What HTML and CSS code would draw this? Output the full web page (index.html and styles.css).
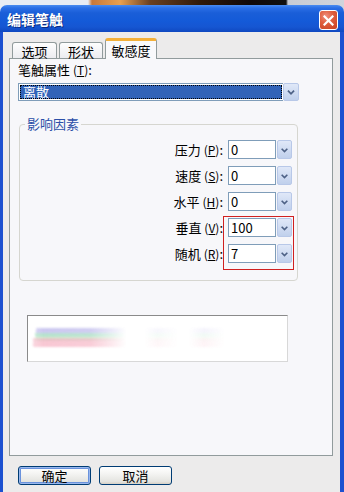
FILE: index.html
```html
<!DOCTYPE html>
<html lang="zh">
<head>
<meta charset="utf-8">
<title>编辑笔触</title>
<link rel="stylesheet" href="styles.css">
</head>
<body>
<div class="window">
  <div class="titlebar">
    <span class="title">编辑笔触</span>
    <span class="close"><svg width="11" height="11" viewBox="0 0 11 11"><path d="M1.5 1.5 L9.5 9.5 M9.5 1.5 L1.5 9.5" stroke="#fff" stroke-width="2.2" stroke-linecap="square"/></svg></span>
  </div>
  <div class="frame">
    <div class="tabs">
      <div class="tab t1">选项</div>
      <div class="tab t2">形状</div>
      <div class="tab active">敏感度</div>
    </div>
    <div class="panel">
      <div class="label">笔触属性 <span class="acc">(<u>T</u>)</span>:</div>
      <div class="combo">
        <div class="combo-val"><span>离散</span></div>
        <div class="drop"><svg width="16" height="16" viewBox="0 0 16 16"><path d="M4.5 6.5 L8 10 L11.5 6.5" fill="none" stroke="#4d6185" stroke-width="2"/></svg></div>
      </div>
      <fieldset class="group">
        <legend>影响因素</legend>
        <div class="row"><span class="rl">压力 <span class="acc">(<u>P</u>)</span>:</span><div class="spin"><div class="inp">0</div><div class="drop"><svg width="16" height="16" viewBox="0 0 16 16"><path d="M4.5 6.5 L8 10 L11.5 6.5" fill="none" stroke="#4d6185" stroke-width="2"/></svg></div></div></div>
        <div class="row"><span class="rl">速度 <span class="acc">(<u>S</u>)</span>:</span><div class="spin"><div class="inp">0</div><div class="drop"><svg width="16" height="16" viewBox="0 0 16 16"><path d="M4.5 6.5 L8 10 L11.5 6.5" fill="none" stroke="#4d6185" stroke-width="2"/></svg></div></div></div>
        <div class="row"><span class="rl">水平 <span class="acc">(<u>H</u>)</span>:</span><div class="spin"><div class="inp">0</div><div class="drop"><svg width="16" height="16" viewBox="0 0 16 16"><path d="M4.5 6.5 L8 10 L11.5 6.5" fill="none" stroke="#4d6185" stroke-width="2"/></svg></div></div></div>
        <div class="row"><span class="rl">垂直 <span class="acc">(<u>V</u>)</span>:</span><div class="spin"><div class="inp">100</div><div class="drop"><svg width="16" height="16" viewBox="0 0 16 16"><path d="M4.5 6.5 L8 10 L11.5 6.5" fill="none" stroke="#4d6185" stroke-width="2"/></svg></div></div></div>
        <div class="row"><span class="rl">随机 <span class="acc">(<u>R</u>)</span>:</span><div class="spin"><div class="inp">7</div><div class="drop"><svg width="16" height="16" viewBox="0 0 16 16"><path d="M4.5 6.5 L8 10 L11.5 6.5" fill="none" stroke="#4d6185" stroke-width="2"/></svg></div></div></div>
        <div class="mark"></div>
      </fieldset>
      <div class="preview">
        <svg width="259" height="45" viewBox="0 0 259 45">
          <defs>
            <filter id="bl" x="-10%" y="-40%" width="120%" height="180%"><feGaussianBlur stdDeviation="1.1"/></filter>
            <pattern id="pb" width="3" height="8" patternUnits="userSpaceOnUse" patternTransform="skewX(35)"><rect width="1.8" height="8" fill="#8c84de"/></pattern>
            <pattern id="pg" width="3" height="8" patternUnits="userSpaceOnUse" patternTransform="skewX(35)"><rect width="1.8" height="8" fill="#74d496"/></pattern>
            <pattern id="pr" width="3" height="8" patternUnits="userSpaceOnUse" patternTransform="skewX(35)"><rect width="1.8" height="8" fill="#f0849e"/></pattern>
            <linearGradient id="fade" x1="0" x2="1" y1="0" y2="0">
              <stop offset="0" stop-color="#fff" stop-opacity="0.6"/>
              <stop offset="0.06" stop-color="#fff" stop-opacity="1"/>
              <stop offset="0.24" stop-color="#fff" stop-opacity="0.9"/>
              <stop offset="0.33" stop-color="#fff" stop-opacity="0.35"/>
              <stop offset="0.38" stop-color="#fff" stop-opacity="0"/>
              <stop offset="0.45" stop-color="#fff" stop-opacity="0"/>
              <stop offset="0.5" stop-color="#fff" stop-opacity="0.15"/>
              <stop offset="0.58" stop-color="#fff" stop-opacity="0"/>
              <stop offset="0.62" stop-color="#fff" stop-opacity="0"/>
              <stop offset="0.68" stop-color="#fff" stop-opacity="0.2"/>
              <stop offset="0.76" stop-color="#fff" stop-opacity="0"/>
            </linearGradient>
            <mask id="m"><rect width="259" height="45" fill="url(#fade)"/></mask>
          </defs>
          <g filter="url(#bl)" mask="url(#m)" opacity="0.75">
            <rect x="8" y="12" width="250" height="8" fill="url(#pb)"/>
            <rect x="7" y="17" width="250" height="8" fill="url(#pg)"/>
            <rect x="5" y="22" width="250" height="9" fill="url(#pr)"/>
          </g>
        </svg>
      </div>
    </div>
    <div class="buttons">
      <div class="btn default"><span>确定</span></div>
      <div class="btn"><span>取消</span></div>
    </div>
  </div>
</div>
</body>
</html>
```
FILE: styles.css
```css
* { box-sizing: border-box; }
html, body { margin: 0; }
body {
  width: 344px;
  height: 492px;
  overflow: hidden;
  padding-top: 5px;
  background: linear-gradient(to right, #e8ecf4 0, #e8ecf4 88px, #c8783a 92px, #e8a050 120px, #6a4020 150px, #301a0a 200px, #100808 250px, #101010 286px, #c8ccd4 288px, #d0d4dc 344px);
  font-family: "Noto Sans CJK SC", "Noto Sans", sans-serif;
  font-size: 12px;
  color: #000;
}
.window { display: flex; flex-direction: column; }
.titlebar {
  height: 27px;
  border-radius: 7px 7px 0 0;
  background: linear-gradient(to bottom, #4a8cf0 0, #2a6ee6 3px, #1a5ed8 8px, #145ad8 16px, #1656d2 22px, #0f48c0 27px);
  display: flex;
  align-items: center;
  justify-content: space-between;
  padding: 0 6px 0 7px;
}
.title {
  color: #fff;
  font-weight: 700;
  font-size: 14px;
  text-shadow: 1px 1px 0 #0a2a80;
  line-height: 16px;
  margin-top: 1px;
}
.close {
  width: 19px;
  height: 20px;
  margin-top: 3px;
  border: 1px solid #fff;
  border-radius: 3px;
  background: radial-gradient(circle at 35% 30%, #f09080 0, #e06040 40%, #c84020 100%);
  display: flex;
  align-items: center;
  justify-content: center;
}
.frame {
  height: 460px;
  background: #ecebeb;
  border-left: 3px solid #1c50d0;
  border-right: 4px solid #1c50d0;
  display: flex;
  flex-direction: column;
  padding: 6px 7px 0 6px;
}
.tabs {
  display: flex;
  align-items: flex-end;
  gap: 2px;
  padding-left: 3px;
  height: 20px;
  position: relative;
  z-index: 2;
}
.tab {
  height: 16px;
  border: 1px solid #919b9c;
  border-bottom: none;
  border-radius: 3px 3px 0 0;
  background: linear-gradient(to bottom, #fefefe, #ececf0);
  display: flex;
  align-items: center;
  justify-content: center;
  font-size: 13px;
  line-height: 15px;
  padding-top: 1px;
}
.t1 { width: 45px; }
.t2 { width: 44px; }
.tab.active {
  width: 52px;
  height: 21px;
  margin-bottom: -1px;
  background: #f9f9fb;
  border-top: 3px solid #f3b03a;
  padding-top: 0;
}
.panel {
  height: 398px;
  border: 1px solid #919b9c;
  background: #f7f7fa;
  padding: 4px 0 0 8px;
  display: flex;
  flex-direction: column;
}
.label { font-size: 13px; line-height: 14px; height: 14px; }
.acc { font-size: 12px; }
.combo {
  margin-top: 6px;
  width: 281px;
  height: 18px;
  display: flex;
}
.combo-val {
  flex: 1;
  border: 1px solid #7f9db9;
  border-right: none;
  background: #fff;
  padding: 1px;
}
.combo-val span {
  display: block;
  height: 100%;
  background: #3163b8;
  color: #fff;
  outline: 1px dotted #000;
  outline-offset: -1px;
  font-size: 13px;
  line-height: 14px;
  padding-left: 3px;
}
.drop {
  width: 16px;
  border: 1px solid #b8c8e8;
  border-radius: 2px;
  background: linear-gradient(to bottom, #e0e8f8, #c0d0ec);
  display: flex;
  align-items: center;
  justify-content: center;
}
.group {
  position: relative;
  margin: 16px 0 0 1px;
  width: 279px;
  height: 164px;
  border: 1px solid #d6d6d0;
  border-radius: 4px;
  padding: 9px 5px 0 0;
  display: flex;
  flex-direction: column;
  align-items: flex-end;
  gap: 7px;
}
.group legend {
  color: #2b4fa8;
  font-size: 13px;
  line-height: 14px;
  padding: 0 2px;
  margin-left: 5px;
}
.row { display: flex; align-items: center; height: 19px; }
.rl { font-size: 13px; line-height: 15px; margin-right: 5px; }
.spin { display: flex; height: 19px; }
.inp {
  width: 48px;
  border: 1px solid #7f9db9;
  background: #fff;
  font-size: 13px;
  line-height: 17px;
  padding-left: 2px;
}
.spin .drop { width: 15px; margin-left: 1px; }
.mark {
  position: absolute;
  left: 203px;
  top: 85px;
  width: 71px;
  height: 54px;
  border: 1px solid #d02020;
}
.preview {
  margin: 34px 0 0 9px;
  width: 261px;
  height: 47px;
  border: 1px solid;
  border-color: #8a8a8a #d8d8d8 #d8d8d8 #8a8a8a;
  background: #fff;
}
.preview svg { display: block; }
.buttons {
  display: flex;
  gap: 8px;
  padding: 10px 0 0 9px;
}
.btn {
  width: 73px;
  height: 19px;
  border: 1px solid #003c74;
  border-radius: 3px;
  background: linear-gradient(to bottom, #ffffff 0, #f4f4f2 40%, #e4e4e0 85%, #d6d0c5 100%);
  display: flex;
  align-items: center;
  justify-content: center;
  font-size: 13px;
  line-height: 15px;
}
.btn.default {
  box-shadow: inset 0 0 0 1px #9ab8ee, inset 0 0 0 2px #6a92dc;
}
```
